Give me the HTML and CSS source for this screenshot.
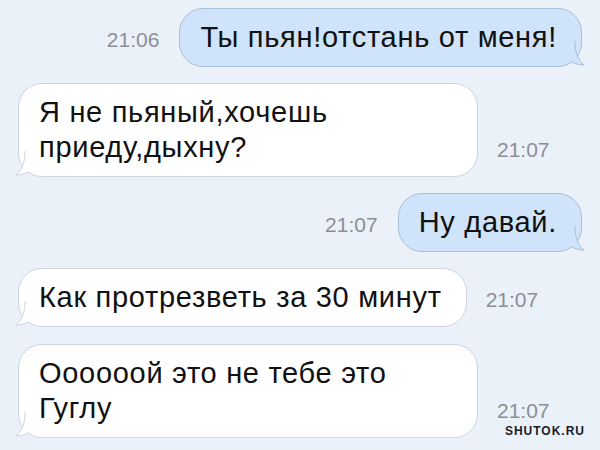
FILE: index.html
```html
<!DOCTYPE html>
<html lang="ru">
<head>
    <meta charset="UTF-8">
    <meta name="viewport" content="width=device-width, initial-scale=1.0">
    <title>Переписка</title>
    <link rel="stylesheet" href="styles.css">
</head>
<body>
    <div class="chat">
        <div class="row out">
            <span class="time">21:06</span>
            <div class="bubble blue">
                Ты пьян!отстань от меня!
                <svg class="tail" width="16" height="26" viewBox="0 0 16 26"><path d="M1 0 C1 10 3 18 10 24 C6 24 2 23 -2 21" /></svg>
            </div>
        </div>
        <div class="row in">
            <div class="bubble white wide">
                Я не пьяный,хочешь<br>приеду,дыхну?
                <svg class="tail" width="16" height="26" viewBox="0 0 16 26"><path d="M15 0 C15 10 13 18 6 24 C10 24 14 23 18 21" /></svg>
            </div>
            <span class="time">21:07</span>
        </div>
        <div class="row out">
            <span class="time">21:07</span>
            <div class="bubble blue">
                Ну давай.
                <svg class="tail" width="16" height="26" viewBox="0 0 16 26"><path d="M1 0 C1 10 3 18 10 24 C6 24 2 23 -2 21" /></svg>
            </div>
        </div>
        <div class="row in">
            <div class="bubble white">
                Как протрезветь за 30 минут
                <svg class="tail" width="16" height="26" viewBox="0 0 16 26"><path d="M15 0 C15 10 13 18 6 24 C10 24 14 23 18 21" /></svg>
            </div>
            <span class="time">21:07</span>
        </div>
        <div class="row in last">
            <div class="bubble white wide">
                Оооооой это не тебе это<br>Гуглу
                <svg class="tail" width="16" height="26" viewBox="0 0 16 26"><path d="M15 0 C15 10 13 18 6 24 C10 24 14 23 18 21" /></svg>
            </div>
            <span class="time">21:07</span>
        </div>
    </div>
    <div class="mark">SHUTOK.RU</div>
</body>
</html>
```

FILE: styles.css
```css
* {
    margin: 0;
    padding: 0;
    box-sizing: border-box;
}
body {
    width: 600px;
    height: 450px;
    background: #ebf1f9;
    font-family: "Liberation Sans", Arial, sans-serif;
    position: relative;
    overflow: hidden;
}
.chat {
    display: flex;
    flex-direction: column;
    gap: 16px;
    padding: 8px 18px 0 18px;
}
.row {
    display: flex;
    align-items: flex-end;
    gap: 19px;
}
.row.out {
    justify-content: flex-end;
    gap: 20px;
}
.row.last {
    margin-top: 1px;
}
.time {
    font-size: 21px;
    line-height: 35px;
    color: #8b8f96;
    margin-bottom: 10px;
}
.bubble {
    position: relative;
    font-size: 29px;
    letter-spacing: 0.7px;
    line-height: 35px;
    color: #111;
    padding: 11px 24px 11px 20px;
    border-radius: 24px;
    border: 1px solid #cfd5dc;
}
.bubble.blue {
    background: #cfe3fa;
    border-color: #a9bfd6;
}
.bubble.white {
    background: #fff;
}
.bubble.wide {
    width: 460px;
}
.tail {
    position: absolute;
    bottom: -1px;
    overflow: visible;
}
.blue .tail {
    right: -9px;
}
.white .tail {
    left: -9px;
}
.blue .tail path {
    fill: #cfe3fa;
    stroke: #a9bfd6;
    stroke-width: 1;
}
.white .tail path {
    fill: #fff;
    stroke: #cfd5dc;
    stroke-width: 1;
}
.mark {
    position: absolute;
    right: 15px;
    bottom: 12px;
    font-weight: bold;
    font-size: 12px;
    letter-spacing: 1px;
    color: #1c1c28;
}
```
